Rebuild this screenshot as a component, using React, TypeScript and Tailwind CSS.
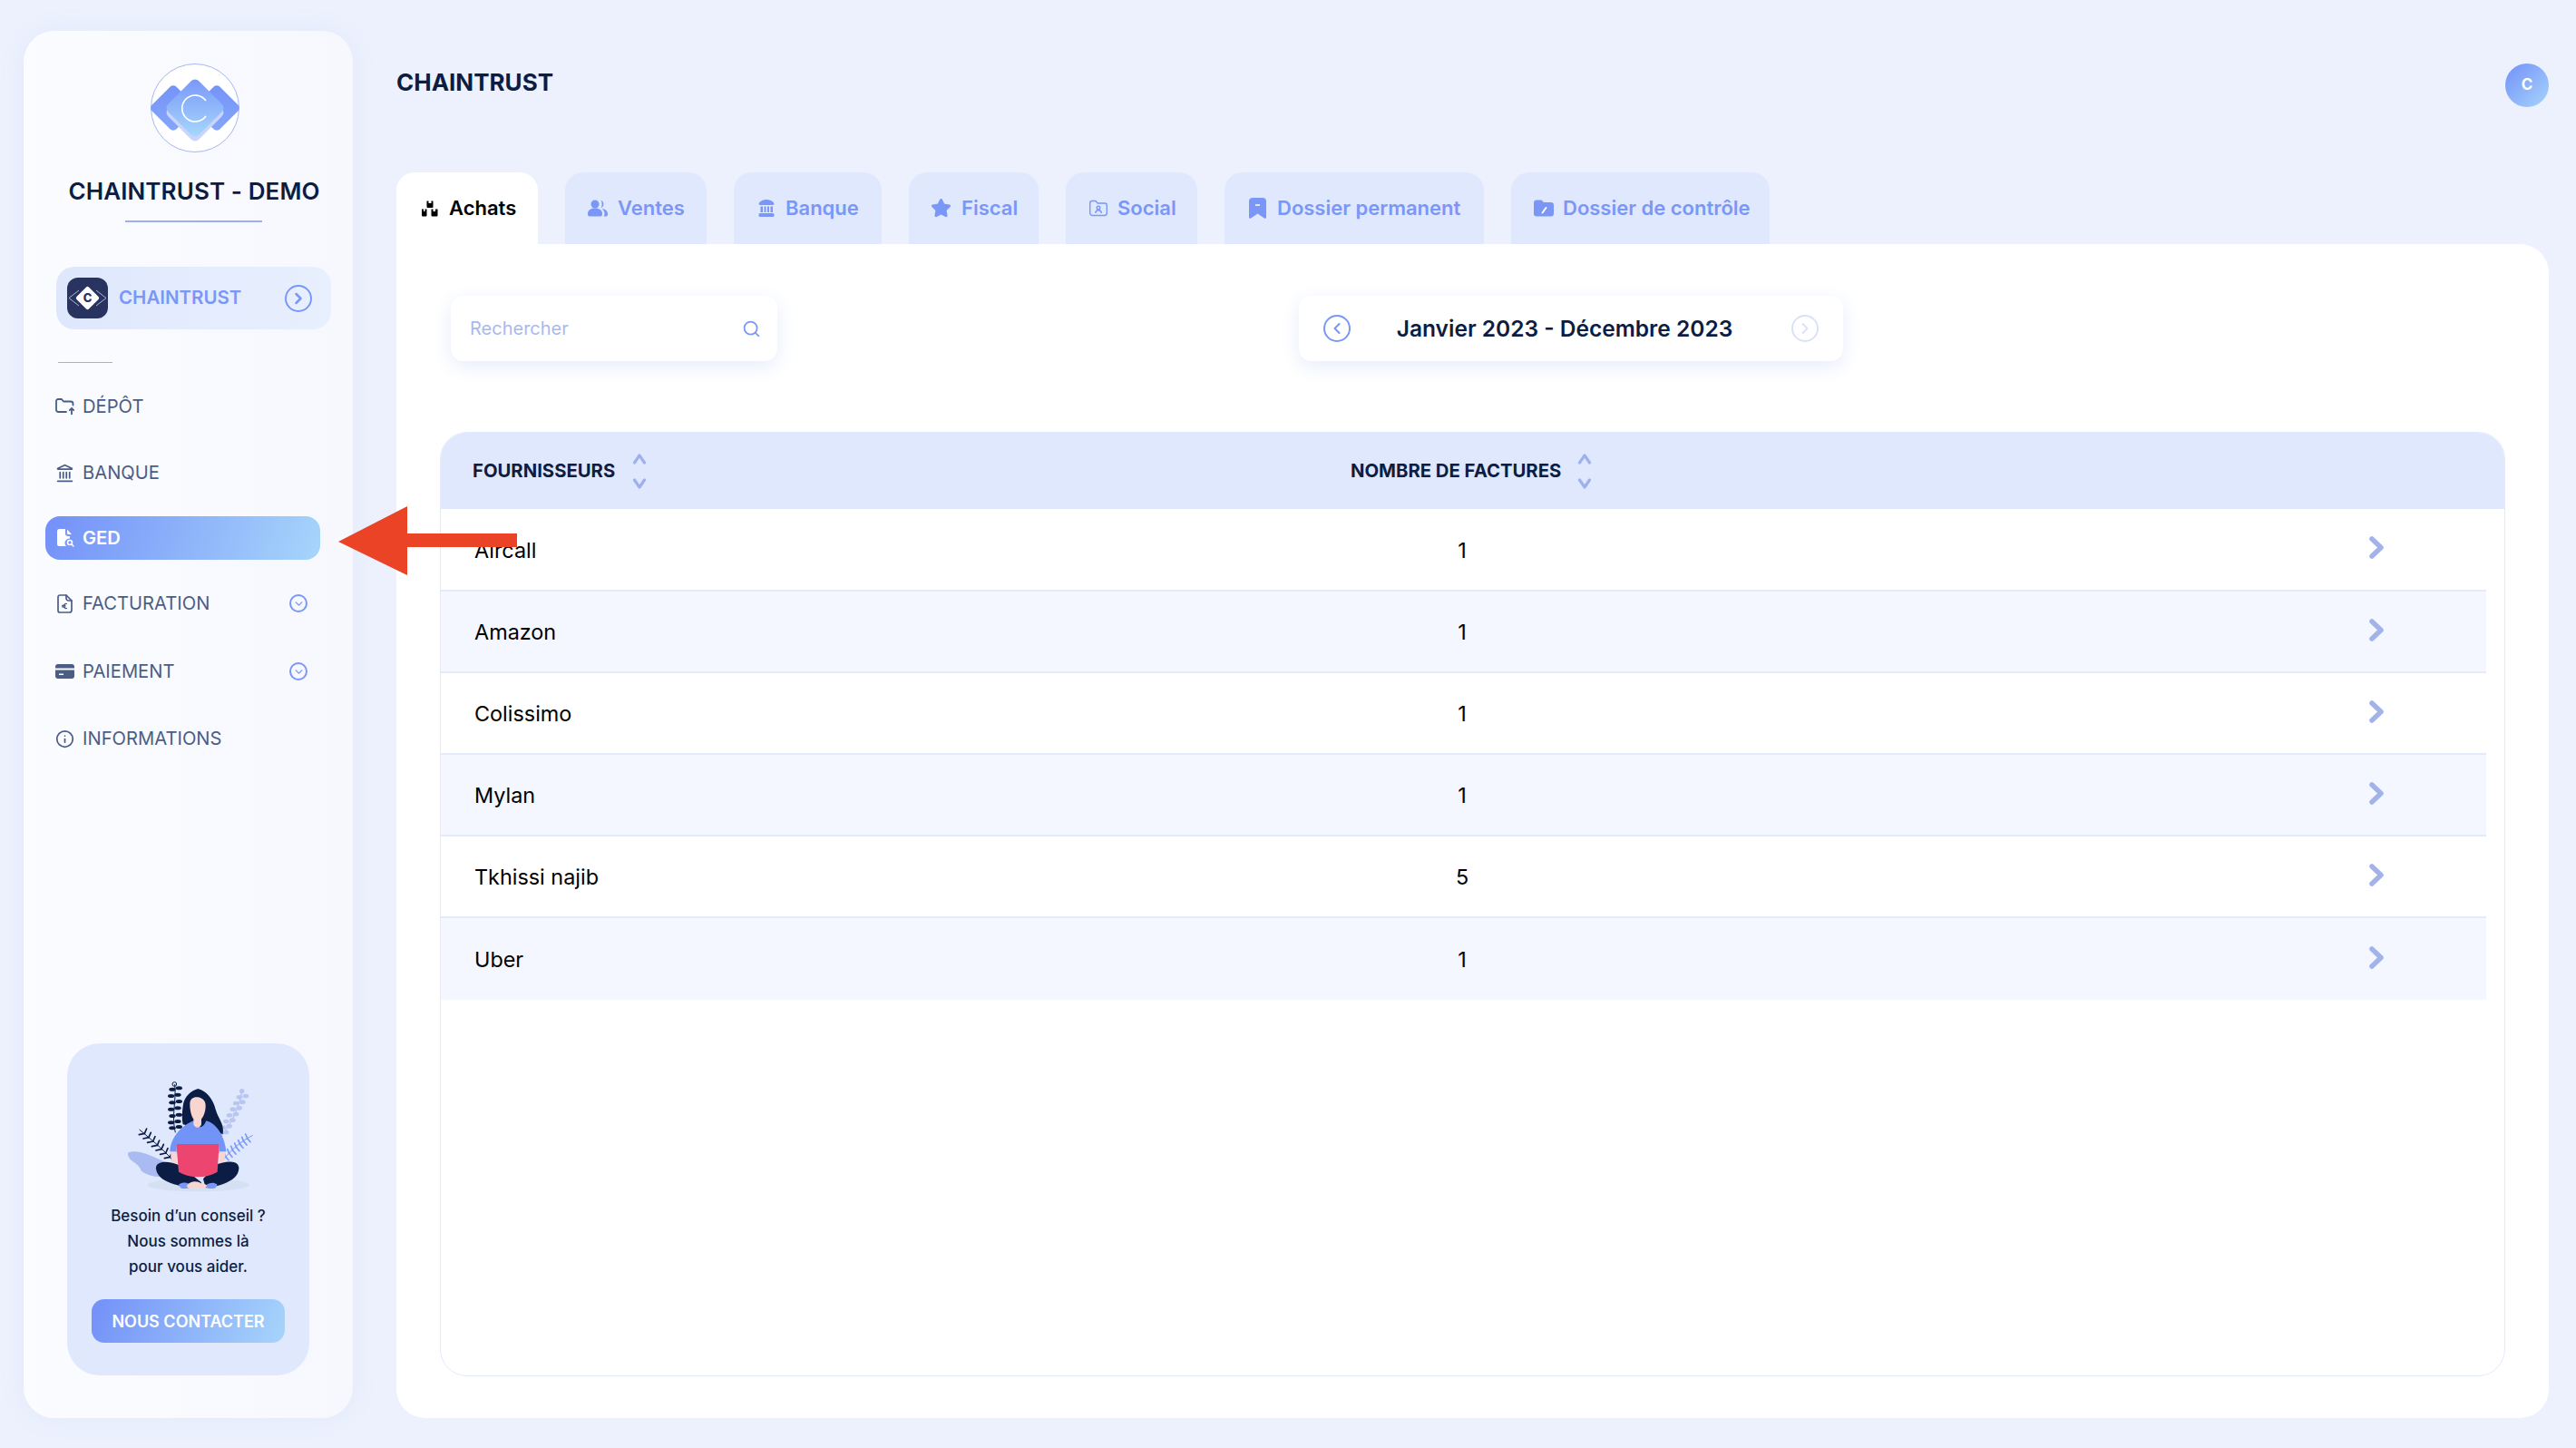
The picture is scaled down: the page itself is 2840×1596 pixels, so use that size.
import React from 'react';
import { Search, Landmark, Info, ChevronLeft, ChevronRight, ChevronDown, Star } from 'lucide-react';

const suppliers = [
  { name: 'Aircall', count: 1 },
  { name: 'Amazon', count: 1 },
  { name: 'Colissimo', count: 1 },
  { name: 'Mylan', count: 1 },
  { name: 'Tkhissi najib', count: 5 },
  { name: 'Uber', count: 1 },
];

const LogoMark = () => (
  <svg width="98" height="98" viewBox="0 0 98 98">
    <defs>
      <linearGradient id="logoSide" x1="0" y1="0" x2="1" y2="1">
        <stop offset="0" stopColor="#7394f8" />
        <stop offset="1" stopColor="#86a6fa" />
      </linearGradient>
      <linearGradient id="logoMain" x1="0" y1="0" x2="1" y2="1">
        <stop offset="0" stopColor="#7896f8" />
        <stop offset="1" stopColor="#a8dafc" />
      </linearGradient>
    </defs>
    <circle cx="49" cy="49" r="48.5" fill="#fff" stroke="#a4b6ee" strokeWidth="1" />
    <rect x="6" y="30" width="38" height="38" rx="5" fill="url(#logoSide)" transform="rotate(45 25 49)" />
    <rect x="54" y="30" width="38" height="38" rx="5" fill="url(#logoSide)" transform="rotate(45 73 49)" />
    <rect x="25" y="30" width="48" height="48" rx="6" fill="#c9d5fb" transform="rotate(45 49 54)" />
    <rect x="25" y="25" width="48" height="48" rx="6" fill="url(#logoMain)" transform="rotate(45 49 49)" />
    <path d="M61 41 A14.5 14.5 0 1 0 61 58" fill="none" stroke="#fff" strokeWidth="1.6" />
  </svg>
);

const CompanyMark = () => (
  <svg width="45" height="45" viewBox="0 0 45 45">
    <rect width="45" height="45" rx="12" fill="#28335f" />
    <path d="M13 14 L2 22.5 L13 31 M32 14 L43 22.5 L32 31" fill="none" stroke="#cdd4ea" strokeWidth="0.8" />
    <rect x="13" y="13" width="19" height="19" rx="2" fill="#fff" transform="rotate(45 22.5 22.5)" />
    <text x="22.5" y="27" textAnchor="middle" fontSize="13" fontWeight="800" fill="#28335f" fontFamily="Inter, sans-serif">C</text>
  </svg>
);

const DepotIcon = () => (
  <svg width="21" height="18" viewBox="0 0 21 18" fill="none" stroke="#4c5d85" strokeWidth="1.8" strokeLinecap="round" strokeLinejoin="round">
    <path d="M12 15H3.5A2.5 2.5 0 0 1 1 12.5V3a2 2 0 0 1 2-2h4l2 2.5h8a2.5 2.5 0 0 1 2.5 2.5v1.5" />
    <path d="M18 11v7M15.8 13.2 18 11l2.2 2.2" />
  </svg>
);

const GedIcon = () => (
  <svg width="19" height="21" viewBox="0 0 19 21" fill="#fff">
    <path d="M2.5 0H9v5a3 3 0 0 0 3 3h2v2.5a5 5 0 0 0-4 8.5H2.500A2.500 2.500 0 0 1 0 16.500V2.500A2.500 2.500 0 0 1 2.500 0Z" />
    <path d="M11 0.500 16 6h-3.500A1.500 1.500 0 0 1 11 4.500Z" />
    <circle cx="14" cy="15" r="2.500" fill="none" stroke="#fff" strokeWidth="1.500" />
    <path d="m16 17 2 2" stroke="#fff" strokeWidth="1.500" strokeLinecap="round" />
  </svg>
);

const InvoiceIcon = () => (
  <svg width="17" height="21" viewBox="0 0 17 21" fill="none" stroke="#4c5d85" strokeWidth="1.700" strokeLinejoin="round" strokeLinecap="round">
    <path d="M3 1h7l6 6v10.500a2.500 2.500 0 0 1-2.500 2.500H3a2 2 0 0 1-2-2V3a2 2 0 0 1 2-2Z" />
    <path d="M10 1v3.500A2.500 2.500 0 0 0 12.500 7H16" />
    <path d="M10.500 10.500a2.600 2.600 0 1 0 0 5M5.500 12.300h3.500M5.500 13.800h3.500" strokeWidth="1.200" />
  </svg>
);

const CardIcon = () => (
  <svg width="21" height="16" viewBox="0 0 21 16" fill="#4c5d85">
    <path d="M3 0h15a3 3 0 0 1 3 3v1.500H0V3a3 3 0 0 1 3-3Z" />
    <path d="M0 6.500h21V13a3 3 0 0 1-3 3H3a3 3 0 0 1-3-3Zm4 4v1.500h5v-1.500Z" fillRule="evenodd" />
  </svg>
);

const CubesIcon = () => (
  <svg width="18" height="18" viewBox="0 0 18 18" fill="#000">
    <path d="M5.500 0.500h2v2.500h3V0.500h2v6.500a1 1 0 0 1-1 1h-5a1 1 0 0 1-1-1Z" />
    <path d="M0 9.500h2v2.500h1.500V9.500h2v7a1 1 0 0 1-1 1H1a1 1 0 0 1-1-1Z" />
    <path d="M9.500 9.500h2v2.500H14V9.500h2.500v7a1 1 0 0 1-1 1h-5a1 1 0 0 1-1-1Z" transform="translate(1 0)" />
  </svg>
);

const UsersIcon = () => (
  <svg width="22" height="19" viewBox="0 0 22 19" fill="#7a97f8">
    <circle cx="8" cy="5" r="4.500" />
    <path d="M0 15.500c0-3.500 3-6 8-6s8 2.500 8 6v1a2 2 0 0 1-2 2H2a2 2 0 0 1-2-2Z" />
    <path d="M14.500 0.800a4.500 4.500 0 0 1 0 8.400c1.500-2.500 1.500-5.900 0-8.400Z" />
    <path d="M15.500 10c3.500 0.300 6.500 2.500 6.500 5.500v1a2 2 0 0 1-2 2h-2.500c0.800-1 1-2 1-3 0-2-1-4-3-5.500Z" />
  </svg>
);

const BankIcon = () => (
  <svg width="18" height="19" viewBox="0 0 18 19" fill="#7a97f8">
    <path d="M9 0c3.500 0 6.500 1.500 8 3.500 0.800 1 0.300 2.500-1 2.500H2C0.700 6 0.200 4.500 1 3.500 2.500 1.500 5.500 0 9 0Z" />
    <path d="M2.500 7.500h2.500v6.500H2.500ZM6.500 7.500H8.500v6.500h-2ZM10 7.500h2v6.500h-2ZM13.500 7.500H16v6.500h-2.500Z" />
    <path d="M2 15h14a1.500 1.500 0 0 1 1.500 1.500v1a1.500 1.500 0 0 1-1.500 1.500H2A1.500 1.500 0 0 1 0.500 17.500v-1A1.500 1.500 0 0 1 2 15Z" />
  </svg>
);

const SocialIcon = () => (
  <svg width="20" height="19" viewBox="0 0 20 19" fill="none" stroke="#7a97f8" strokeWidth="1.400" strokeLinejoin="round">
    <path d="M3 1.500h4l2 2.500h8a2.300 2.300 0 0 1 2.300 2.300v8.500A2.700 2.700 0 0 1 16.600 17.500H3.400A2.700 2.700 0 0 1 0.700 14.800V3.800A2.300 2.300 0 0 1 3 1.500Z" />
    <circle cx="10" cy="9" r="1.800" />
    <path d="M6.800 15c0-2 1.300-3.200 3.200-3.200s3.200 1.200 3.200 3.200" />
  </svg>
);

const BookmarkIcon = () => (
  <svg width="19" height="23" viewBox="0 0 19 23" fill="#7a97f8">
    <path d="M4 0h11a4 4 0 0 1 4 4v17.500c0 1.200-1.300 1.800-2.200 1L9.500 17.500 2.200 22.500C1.300 23.300 0 22.700 0 21.500V4a4 4 0 0 1 4-4Zm3 7v2h5V7Z" fillRule="evenodd" />
  </svg>
);

const FolderEditIcon = () => (
  <svg width="22" height="19" viewBox="0 0 22 19" fill="#7a97f8">
    <path d="M3 0.500h5.500l2.500 2.500h8a3 3 0 0 1 3 3v9.500a3 3 0 0 1-3 3H3a3 3 0 0 1-3-3v-12a3 3 0 0 1 3-3Z" />
    <path d="m9.500 14.500 4-5.500" stroke="#fff" strokeWidth="2" strokeLinecap="round" />
  </svg>
);

const Illustration = () => {
  const darkStem = [62, 84, 106, 128, 150, 172, 190];
  const navyFern = [0, 1, 2, 3, 4, 5, 6];
  return (
    <svg width="170" height="140" viewBox="0 0 510 420">
      <ellipse cx="290" cy="378" rx="168" ry="22" fill="#d5e0f3" />
      <path d="M57 272c30-14 75 8 118 28l5 50c-30 5-62-6-78-18-6-14-14-22-24-28-10-6-22-18-21-32Z" fill="#a9bbf0" />
      {/* back lilac branch */}
      <path d="M434 70 C425 130 395 180 360 225" fill="none" stroke="#b8c6f0" strokeWidth="4" />
      <circle cx="434" cy="68" r="8" fill="#b8c6f0" />
      {[88, 108, 128, 148, 168, 188, 208].map((y, i) => (
        <g key={y} fill="#b8c6f0">
          <ellipse cx={438 - i * 11 - 12} cy={y} rx="10" ry="7" />
          <ellipse cx={438 - i * 11 + 9} cy={y - 4} rx="10" ry="7" />
        </g>
      ))}
      {/* blue fern */}
      <path d="M470 214 C430 235 400 260 372 296" fill="none" stroke="#7a97f8" strokeWidth="3" />
      {navyFern.map(i => (
        <g key={i} stroke="#7a97f8" strokeWidth="5" strokeLinecap="round">
          <path d={`M${452 - i * 12} ${224 + i * 10}l-6 -14`} />
          <path d={`M${452 - i * 12} ${224 + i * 10}l10 12`} />
        </g>
      ))}
      {/* dark upright branch */}
      <path d="M212 45 C218 100 200 150 214 205" fill="none" stroke="#0b1d44" strokeWidth="3" />
      <circle cx="211" cy="45" r="7" fill="none" stroke="#0b1d44" strokeWidth="3" />
      {darkStem.map((y, i) => (
        <g key={y} fill="#0b1d44">
          <ellipse cx={i % 2 ? 200 : 204} cy={y} rx="11" ry="6" />
          <ellipse cx={i % 2 ? 222 : 226} cy={y - 4} rx="11" ry="6" />
        </g>
      ))}
      {/* dark fern */}
      <path d="M95 195 C130 225 175 260 210 302" fill="none" stroke="#0b1d44" strokeWidth="3" />
      {navyFern.map(i => (
        <g key={i} stroke="#0b1d44" strokeWidth="5" strokeLinecap="round">
          <path d={`M${112 + i * 14} ${208 + i * 13}l7 -16`} />
          <path d={`M${112 + i * 14} ${208 + i * 13}l-18 4`} />
        </g>
      ))}
      {/* figure */}
      <path d="M289 60c-22 6-46 24-50 58-3 22-4 44 0 60l132 32c6-34-16-52-24-82-8-34-30-60-58-68Z" fill="#0b1d44" />
      <path d="M196 268c2-48 42-90 80-102 10 28 30 28 40 0 34 8 62 52 66 102l-24 6v-30H218v30Z" fill="#7394f7" />
      <path d="M262 110c0-18 14-24 26-22 14 2 26 10 26 28 0 22-8 38-14 44v18c-4 14-22 14-26 0v-18c-6-8-12-26-12-50Z" fill="#f9d5d0" />
      <path d="M198 268h20v42l-8 6c-8-14-12-32-12-48ZM360 268h20c0 18-4 34-14 48l-6-6Z" fill="#f9d5d0" />
      <path d="M150 322c0-24 40-26 80-8l70 56-8 18c-60 0-142-20-142-66Z" fill="#0b1d44" />
      <path d="M424 322c0-24-40-26-76-10l-42 46 8 30c50-6 110-24 110-66Z" fill="#0b1d44" />
      <path d="M226 376c16-10 30-6 44 6l-12 8h-20c-8 0-12-8-12-14ZM352 376c-12-8-24-6-40 4l10 10h18c8 0 12-8 12-14Z" fill="#7a97f8" />
      <path d="M252 380c14-16 34-16 48-6 6-2 12 0 18 6 0 6-4 10-12 10h-44c-6 0-10-4-10-10Z" fill="#f9d5d0" />
      <path d="M217 243h142l-6 92c-40 22-88 22-128 0Z" fill="#ec4670" />
    </svg>
  );
};

const NavCircle = () => (
  <span className="w-5 h-5 rounded-full border-2 border-[#7a97f8] flex items-center justify-center text-[#7a97f8]">
    <ChevronDown size={13} strokeWidth={2.6} />
  </span>
);

const SortArrows = () => (
  <div className="flex flex-col gap-[15px] text-[#9fb1ec]">
    <svg width="16" height="12" viewBox="0 0 16 12" fill="none" stroke="currentColor" strokeWidth="3.2" strokeLinecap="round" strokeLinejoin="round"><path d="M2.500 10 8 2l5.500 8" /></svg>
    <svg width="16" height="12" viewBox="0 0 16 12" fill="none" stroke="currentColor" strokeWidth="3.2" strokeLinecap="round" strokeLinejoin="round"><path d="M2.500 2 8 10l5.500-8" /></svg>
  </div>
);

export default function App() {
  return (
    <div className="relative w-[2840px] h-[1596px] overflow-hidden bg-[#ecf1fd] flex items-start font-['Inter',sans-serif]">
      {/* sidebar */}
      <aside className="ml-[26px] mt-[34px] w-[363px] h-[1529px] rounded-[34px] bg-gradient-to-r from-[#fbfcff] to-[#f6f8fe] shadow-[0_0_28px_#e2e9fc] flex flex-col pt-[36px] pb-[47px]">
        <div className="flex justify-center pl-[14px]">
          <LogoMark />
        </div>
        <h1 className="mt-[25px] pl-[13px] h-[36px] leading-[36px] text-center text-[26px] font-semibold text-[#0c1d43] tracking-[0.1px] whitespace-nowrap">CHAINTRUST - DEMO</h1>
        <div className="mt-[14px] ml-[112px] w-[151px] h-[2px] bg-[#9db0ec]" />

        <div className="mt-[49px] ml-[36px] w-[303px] h-[69px] rounded-[20px] bg-gradient-to-r from-[#dfe7fc] to-[#e8f0fe] flex items-center pl-[12px] pr-[21px]">
          <CompanyMark />
          <span className="ml-[12px] text-[20.500px] font-semibold text-[#7a97f8]">CHAINTRUST</span>
          <span className="ml-auto w-[30px] h-[30px] rounded-full border-[2.500px] border-[#7a97f8] flex items-center justify-center text-[#7a97f8]">
            <ChevronRight size={20} strokeWidth={3} />
          </span>
        </div>
        <div className="mt-[36px] ml-[38px] w-[60px] h-px bg-[#9db0ec]" />

        <nav className="ml-[24px] w-[303px] flex flex-col text-[20.200px] text-[#4c5d85]">
          <a className="mt-[28px] h-[40px] flex items-center pl-[11px]">
            <span className="w-[30px]"><DepotIcon /></span>DÉPÔT
          </a>
          <a className="mt-[33px] h-[40px] flex items-center pl-[11px]">
            <span className="w-[30px]"><Landmark size={21} strokeWidth={2} /></span>BANQUE
          </a>
          <a className="mt-[28px] h-[48px] rounded-[16px] bg-[linear-gradient(110deg,#7390f8,#a6d5fb)] flex items-center pl-[13px] font-semibold text-white">
            <span className="w-[28px]"><GedIcon /></span>GED
          </a>
          <a className="mt-[28px] h-[40px] flex items-center pl-[13px] pr-[14px]">
            <span className="w-[28px]"><InvoiceIcon /></span>FACTURATION
            <span className="ml-auto"><NavCircle /></span>
          </a>
          <a className="mt-[35px] h-[40px] flex items-center pl-[11px] pr-[14px]">
            <span className="w-[30px]"><CardIcon /></span>PAIEMENT
            <span className="ml-auto"><NavCircle /></span>
          </a>
          <a className="mt-[34px] h-[40px] flex items-center pl-[11px]">
            <span className="w-[30px]"><Info size={21} strokeWidth={2} /></span>INFORMATIONS
          </a>
        </nav>

        <div className="mt-auto ml-[48px] w-[267px] h-[366px] rounded-[36px] bg-[#dfe8fc] flex flex-col items-center pt-[30px]">
          <div className="-ml-[2px]"><Illustration /></div>
          <p className="mt-[6px] text-center text-[17px] leading-[28px] font-medium text-[#0c1d43]">
            Besoin d’un conseil ?<br />Nous sommes là<br />pour vous aider.
          </p>
          <button className="mt-[22px] w-[213px] h-[48px] rounded-[14px] bg-[linear-gradient(110deg,#7390f8,#a6d5fb)] text-[18px] font-semibold text-white">NOUS CONTACTER</button>
        </div>
      </aside>

      {/* main */}
      <main className="ml-[48px] w-[2373px] flex flex-col">
        <header className="mt-[70px] h-[48px] flex justify-between items-start">
          <h2 className="h-[42px] leading-[42px] text-[26px] font-bold text-[#0c1d43]">CHAINTRUST</h2>
          <div className="w-[48px] h-[48px] rounded-full bg-[linear-gradient(135deg,#7390f8,#a6d5fb)] flex items-center justify-center text-[17px] font-bold text-white">C</div>
        </header>

        <div className="mt-[72px] h-[79px] flex gap-[30px] text-[22px] font-semibold text-[#7a97f8]">
          <div className="w-[156px] rounded-t-[20px] bg-white text-black flex items-center pl-[28px] gap-[12px]"><CubesIcon />Achats</div>
          <div className="w-[156px] rounded-t-[20px] bg-[#dfe8fc] flex items-center pl-[25px] gap-[11px]"><UsersIcon />Ventes</div>
          <div className="w-[163px] rounded-t-[20px] bg-[#dfe8fc] flex items-center pl-[27px] gap-[12px]"><BankIcon />Banque</div>
          <div className="w-[143px] rounded-t-[20px] bg-[#dfe8fc] flex items-center pl-[24px] gap-[11px]"><Star size={23} fill="#7a97f8" />Fiscal</div>
          <div className="w-[145px] rounded-t-[20px] bg-[#dfe8fc] flex items-center pl-[26px] gap-[11px]"><SocialIcon />Social</div>
          <div className="w-[286px] rounded-t-[20px] bg-[#dfe8fc] flex items-center pl-[27px] gap-[12px]"><BookmarkIcon />Dossier permanent</div>
          <div className="w-[285px] rounded-t-[20px] bg-[#dfe8fc] flex items-center pl-[25px] gap-[10px]"><FolderEditIcon />Dossier de contrôle</div>
        </div>

        <section className="h-[1294px] bg-white rounded-b-[32px] rounded-tr-[32px] pt-[57px] pl-[48px]">
          <div className="flex">
            <div className="ml-[12px] w-[360px] h-[72px] rounded-[14px] bg-white shadow-[0_6px_22px_#e6ecfb] flex items-center pl-[21px] pr-[18px] justify-between">
              <span className="text-[20px] text-[#a9b9ee]">Rechercher</span>
              <Search size={21} className="text-[#7a97f8]" />
            </div>
            <div className="ml-[575px] w-[600px] h-[72px] rounded-[14px] bg-white shadow-[0_6px_22px_#e6ecfb] flex items-center pl-[27px] pr-[27px] justify-between">
              <span className="w-[30px] h-[30px] rounded-full border-[2.500px] border-[#7a97f8] text-[#7a97f8] flex items-center justify-center"><ChevronLeft size={20} strokeWidth={2.500} /></span>
              <span className="mr-[14px] text-[24.500px] font-semibold text-[#0c1d43]">Janvier 2023 - Décembre 2023</span>
              <span className="w-[30px] h-[30px] rounded-full border-[2.500px] border-[#dbe2f5] text-[#dbe2f5] flex items-center justify-center"><ChevronRight size={20} strokeWidth={2.500} /></span>
            </div>
          </div>

          <div className="mt-[78px] w-[2277px] h-[1041px] rounded-[30px] border border-[#e3eafb] overflow-hidden">
            <div className="h-[84px] bg-[#dfe8fc] grid grid-cols-[1003px_1fr] items-center text-[20.300px] font-bold text-[#0c1d43]">
              <div className="pl-[35px] flex items-center gap-[19px]">FOURNISSEURS<SortArrows /></div>
              <div className="flex items-center gap-[18px]">NOMBRE DE FACTURES<SortArrows /></div>
            </div>
            <div className="w-[2255px]">
              {suppliers.map((s, i) => (
                <div key={s.name} className={`${i === 0 ? 'h-[91px]' : 'h-[90px]'} grid grid-cols-[1003px_246px_1fr] items-center text-[23.400px] text-black ${i % 2 ? 'bg-[#f4f7ff]' : 'bg-white'} ${i < 5 ? 'border-b-2 border-[#e3ebfb]' : ''}`}>
                  <div className="pl-[37px] pt-[2px]">{s.name}</div>
                  <div className="text-center pt-[2px]">{s.count}</div>
                  <div className="flex justify-end pr-[113px]">
                    <svg className="-mt-[4px]" width="16" height="25" viewBox="0 0 16 25" fill="none" stroke="#a3b3ea" strokeWidth="5.500" strokeLinecap="round" strokeLinejoin="round"><path d="M3 3l10 9.500L3 22" /></svg>
                  </div>
                </div>
              ))}
            </div>
          </div>
        </section>
      </main>

      {/* red annotation arrow */}
      <svg className="absolute left-[373px] top-[558px]" width="198" height="76" viewBox="0 0 198 76">
        <path d="M0 39 76 0v30h121v15H76v31Z" fill="#ea4325" />
      </svg>
    </div>
  );
}
